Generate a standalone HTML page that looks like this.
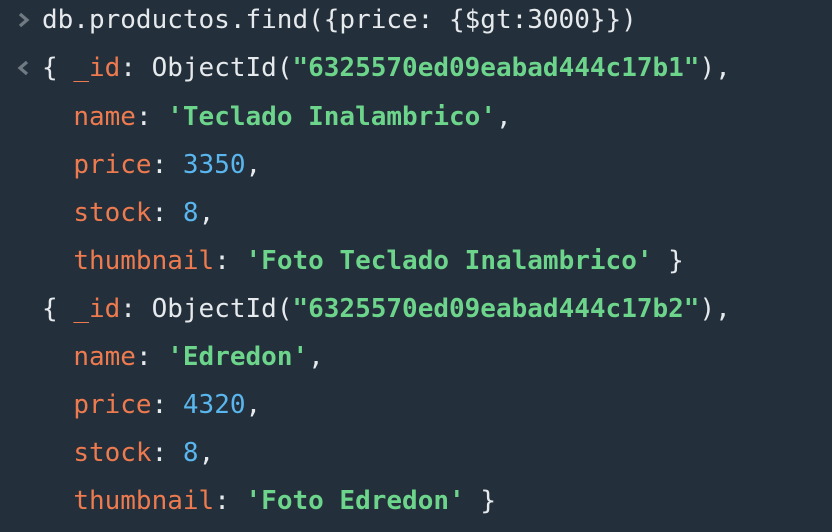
<html><head><style>
body{margin:0;width:832px;height:532px;background:#232f3a;overflow:hidden;font-family:"DejaVu Sans Mono","Liberation Mono",monospace;font-size:26px;color:#e6eaed}
.l{position:absolute;left:42px;height:48px;line-height:48px;white-space:pre}
.k{color:#ee7a4f}.s{color:#6dd58b;font-weight:bold}.n{color:#5ab6ee}
svg{position:absolute}
</style></head><body>
<svg style="left:14px;top:10px" width="20" height="20"><polyline points="6,4 13,10 6,16" fill="none" stroke="#6f7a83" stroke-width="3.2"/></svg>
<svg style="left:14px;top:58px" width="20" height="20"><polyline points="13,4 6,10 13,16" fill="none" stroke="#6f7a83" stroke-width="3.2"/></svg>
<div class="l" style="top:-4px">db.productos.find({price: {$gt:3000}})</div>
<div class="l" style="top:44px">{ <span class="k">_id</span>: ObjectId(<span class="s">"6325570ed09eabad444c17b1"</span>),</div>
<div class="l" style="top:93px">  <span class="k">name</span>: <span class="s">'Teclado Inalambrico'</span>,</div>
<div class="l" style="top:141px">  <span class="k">price</span>: <span class="n">3350</span>,</div>
<div class="l" style="top:189px">  <span class="k">stock</span>: <span class="n">8</span>,</div>
<div class="l" style="top:237px">  <span class="k">thumbnail</span>: <span class="s">'Foto Teclado Inalambrico'</span> }</div>
<div class="l" style="top:285px">{ <span class="k">_id</span>: ObjectId(<span class="s">"6325570ed09eabad444c17b2"</span>),</div>
<div class="l" style="top:333px">  <span class="k">name</span>: <span class="s">'Edredon'</span>,</div>
<div class="l" style="top:381px">  <span class="k">price</span>: <span class="n">4320</span>,</div>
<div class="l" style="top:429px">  <span class="k">stock</span>: <span class="n">8</span>,</div>
<div class="l" style="top:477px">  <span class="k">thumbnail</span>: <span class="s">'Foto Edredon'</span> }</div>
</body></html>
